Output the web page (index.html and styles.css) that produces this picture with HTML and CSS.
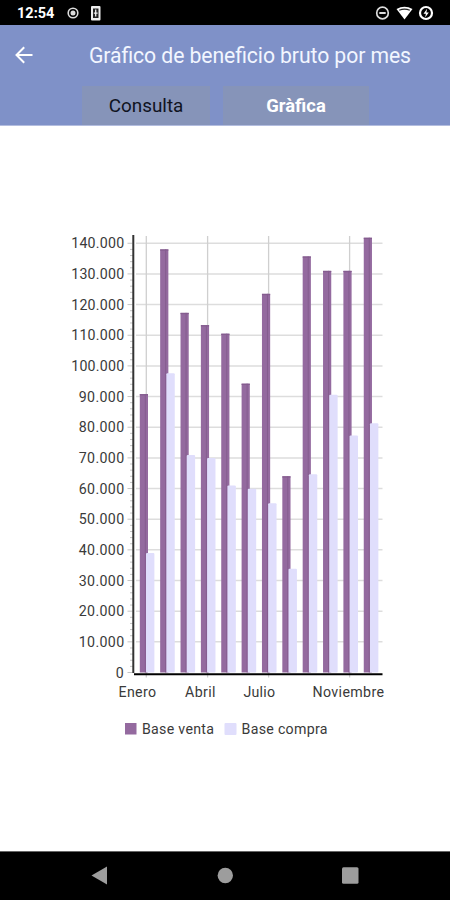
FILE: index.html
```
<!DOCTYPE html>
<html lang="es">
<head>
<meta charset="utf-8">
<meta name="viewport" content="width=device-width, initial-scale=1">
<title>Gráfico de beneficio bruto por mes</title>
<link rel="stylesheet" href="styles.css">
</head>
<body>
<div class="statusbar">
  <span class="clock">12:54</span>
  <svg class="status-left" width="42" height="16" viewBox="0 0 42 16">
    <g fill="none" stroke="#ddd" stroke-width="1.6"><circle cx="8" cy="8" r="4.8"/><circle cx="8" cy="8" r="1.7" fill="#ddd"/></g>
    <rect x="26" y="1" width="9.5" height="14.5" rx="1" fill="#eee"/>
    <rect x="28" y="3.5" width="5.5" height="9.5" fill="#222"/>
    <path d="M30.7 4.5v7M28.8 8.2h3.8" stroke="#eee" stroke-width="1.3"/>
  </svg>
  <svg class="status-right" width="62" height="16" viewBox="0 0 62 16">
    <circle cx="10.500" cy="8" r="5.800" fill="none" stroke="#ddd" stroke-width="1.700"/>
    <path d="M7.300 8h6.400" stroke="#ddd" stroke-width="2"/>
    <path d="M24.500 4Q32.500 -0.500 40.500 4L32.500 14.500Z" fill="#fff"/>
    <path d="M27.200 5.300Q32.500 3 37.800 5.300" fill="none" stroke="#222" stroke-width="1.200"/>
    <circle cx="54" cy="8" r="6" fill="none" stroke="#fff" stroke-width="2.200"/>
    <path d="M55.100 3.800 51.500 8.800h2.400l-.8 3.600 3.700-5h-2.400z" fill="#fff"/>
  </svg>
</div>
<header class="header">
  <div class="titlebar">
    <svg width="18" height="18" viewBox="0 0 18 18" fill="none" stroke="#fff" stroke-width="2"><path d="M17.500 9H2M9.200 1.200 1.500 9l7.700 7.800"/></svg>
    <h1 class="title"><svg width="324" height="30"><text x="0" y="22.500" textLength="322">Gráfico de beneficio bruto por mes</text></svg></h1>
  </div>
  <nav class="tabs">
    <a class="tab">Consulta</a>
    <a class="tab tab-active">Gràfica</a>
  </nav>
</header>
<main class="content">
  <svg class="chart" width="450" height="530" viewBox="0 226 450 530">
    <g id="grid"></g>
    <g id="bars"></g>
    <path class="axis-y" d="M133.300 235v438"/>
    <path class="axis-x" d="M134 674.300h248.500"/>
    <g class="labels">
      <text x="118.500" y="696.500" textLength="37.500">Enero</text>
      <text x="185" y="696.500" textLength="30.500">Abril</text>
      <text x="243.500" y="696.500" textLength="31.500">Julio</text>
      <text x="312.500" y="696.500" textLength="71.500">Noviembre</text>
      <rect class="venta" x="125" y="723" width="11.500" height="11.500"/>
      <text x="142" y="734" textLength="72">Base venta</text>
      <rect class="compra" x="224.500" y="723" width="12" height="12" rx="1"/>
      <text x="241.500" y="734" textLength="86">Base compra</text>
    </g>
  </svg>
</main>
<footer class="navbar">
  <svg width="18" height="20" viewBox="0 0 18 20"><path d="M0.500 9.500 16 0.500v18Z"/></svg>
  <svg width="18" height="20" viewBox="0 0 18 20"><circle cx="9.300" cy="9.500" r="7.700"/></svg>
  <svg width="18" height="20" viewBox="0 0 18 20"><rect x="1" y="1.200" width="16.500" height="16.500" rx="1.500"/></svg>
</footer>
<script src="chart.js"></script>
</body>
</html>
```
FILE: styles.css
```
* { box-sizing: border-box; }
body {
  margin: 0;
  width: 450px;
  height: 900px;
  display: flex;
  flex-direction: column;
  overflow: hidden;
  background: #fff;
  font-family: Roboto, sans-serif;
}
svg { display: block; }
.statusbar {
  height: 25px;
  background: #000;
  display: flex;
  align-items: center;
  padding: 1px 16px 0 17px;
}
.clock {
  width: 48px;
  padding-top: 1px;
  color: #fff;
  font-size: 14.5px;
  font-weight: 700;
  line-height: 16px;
}
.status-right { margin-left: auto; }
.header {
  height: 101px;
  background: #7f91c8;
  border-bottom: 1px solid #b3bddf;
}
.titlebar {
  height: 61px;
  display: flex;
  align-items: center;
  padding: 0 0 2px 15px;
}
.title { margin: 0 0 0 56px; font-weight: 400; font-size: 21.2px; }
.title text { fill: #f2f6ff; }
.tabs { display: flex; gap: 13px; margin-left: 82px; }
.tab {
  width: 128px;
  height: 39px;
  padding-top: 1px;
  background: #8694b9;
  color: #10131f;
  font-size: 18.9px;
  line-height: 37px;
  text-align: center;
}
.tab-active { width: 146px; color: #fff; font-weight: 700; font-size: 18.4px; }
.content { flex: 1; padding-top: 100px; }
.chart text { font-size: 14.2px; fill: #3a3a3a; }
.gridline { stroke: #dddddd; stroke-width: 1.5; }
.gridline-v { stroke: #cfcfcf; stroke-width: 1.3; }
.tick { stroke: #c4c4c4; stroke-width: 1; }
.venta { fill: #946a9f; }
.venta-edge { fill: #855d8f; }
.compra { fill: #e0defc; }
.axis-y { stroke: #333; stroke-width: 2; }
.axis-x { stroke: #000; stroke-width: 2; }
.navbar {
  height: 49px;
  background: #000;
  border-top: 1px solid #666;
  display: flex;
  justify-content: space-between;
  padding: 14px 91px 0;
  fill: #9d9d9d;
}
```
FILE: chart.js
```
const NS = "http://www.w3.org/2000/svg";
const grid = document.getElementById("grid");
const bars = document.getElementById("bars");
const BASE = 672.5;
const STEP = 30.66;

function add(parent, tag, attrs, text) {
  const el = document.createElementNS(NS, tag);
  for (const key in attrs) el.setAttribute(key, attrs[key]);
  if (text) el.textContent = text;
  parent.appendChild(el);
}

for (let i = 0; i <= 14; i++) {
  const y = BASE - i * STEP;
  if (i) add(grid, "path", { class: "gridline", d: `M136 ${y}H382.500` });
  add(grid, "path", { class: "tick", d: `M127.500 ${y}h5` });
  for (let k = 1; k < 5 && i < 14; k++) {
    add(grid, "path", { class: "tick", d: `M130 ${y - k * STEP / 5}h3` });
  }
  const width = i === 0 ? 8.5 : i < 10 ? 45.5 : 53;
  add(grid, "text", { x: 124.200 - width, y: y + 5.2, textLength: width }, i ? i * 10 + ".000" : "0");
}
for (const x of [146.3, 207.6, 268.6, 349.6]) {
  add(grid, "path", { class: "gridline-v", d: `M${x} 236V677.500` });
}

// Values in thousands, January to December: [sales base, purchase base]
const data = [
  [90.8, 39], [138, 97.6], [117.3, 70.9], [113.3, 70], [110.5, 61], [94.2, 59.9],
  [123.5, 55.2], [64, 33.8], [135.7, 64.7], [131, 90.6], [131, 77.3], [141.8, 81.3]
];
data.forEach(([venta, compra], i) => {
  const x = 139.8 + i * 20.36;
  const top = BASE - venta * STEP / 10;
  const low = BASE - compra * STEP / 10;
  add(bars, "rect", { class: "venta", x, y: top, width: 8.2, height: BASE - top });
  add(bars, "rect", { class: "venta-edge", x, y: top, width: 8.2, height: 1.3 });
  add(bars, "rect", { class: "venta-edge", x: x + 5, y: top, width: 1, height: BASE - top });
  add(bars, "rect", { class: "compra", x: x + 6.2, y: low, width: 8.4, height: BASE - low, rx: 1 });
});
```
